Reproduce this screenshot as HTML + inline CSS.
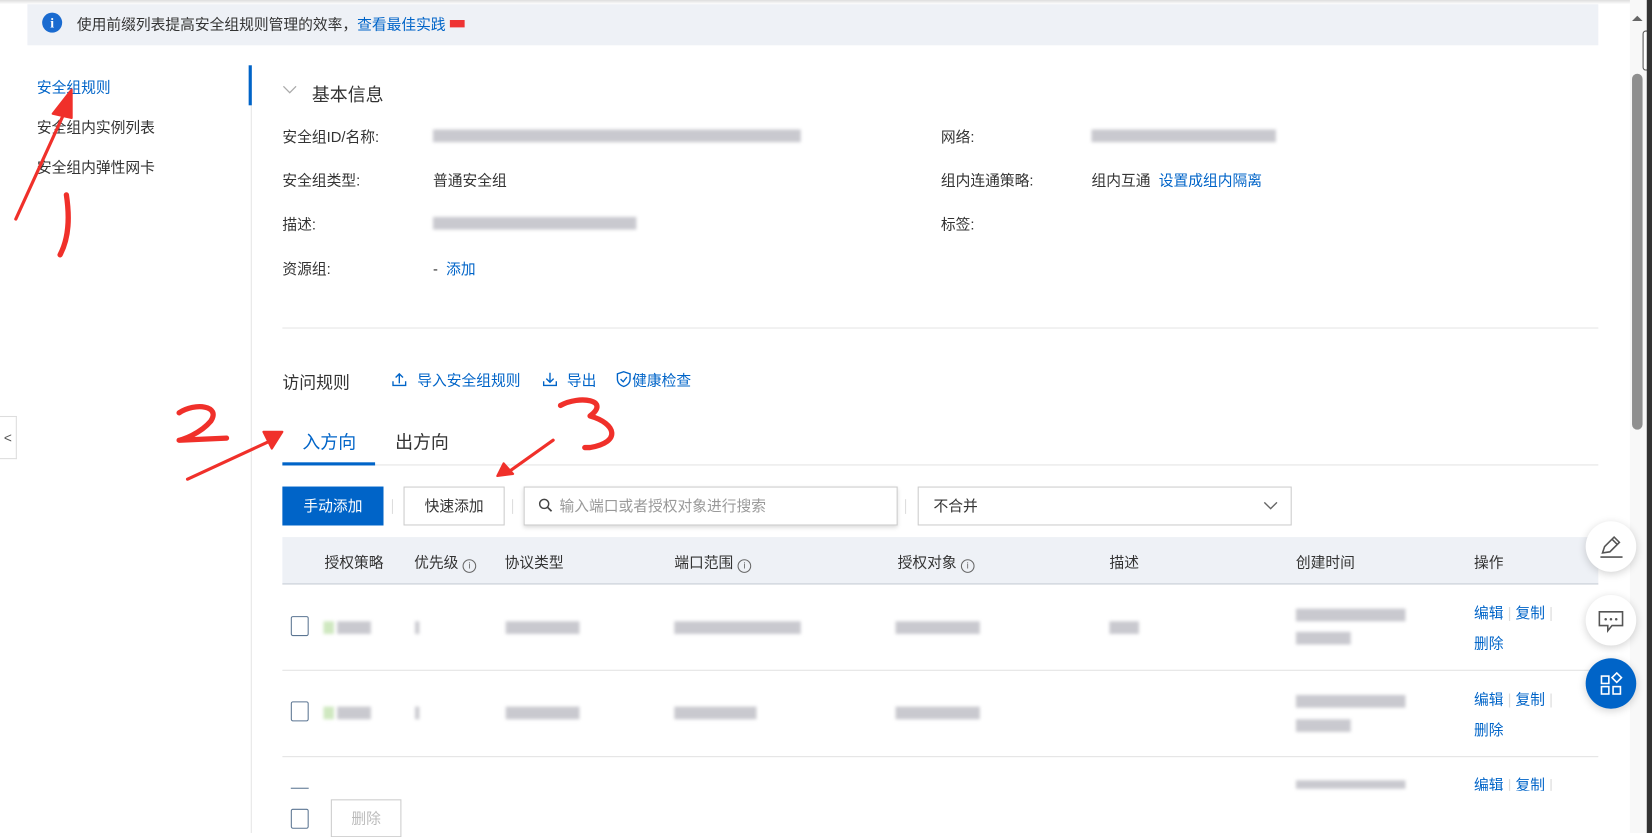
<!DOCTYPE html>
<html><head><meta charset="utf-8"><style>
*{margin:0;padding:0;box-sizing:border-box}
html,body{width:1652px;height:833px;overflow:hidden;background:#fff}
#w{position:absolute;left:0;top:0;width:1568px;height:791px;transform:scale(1.0536,1.0531);transform-origin:0 0;font-family:"Liberation Sans","Noto Sans CJK SC",sans-serif;color:#333;font-size:14px}
.a{position:absolute;white-space:nowrap}
.b{color:#0064c8}
.bl{position:absolute;background:#c9c9cf;filter:blur(1.5px);height:12px}
.sep{position:absolute;width:1px;height:14px;background:#ddd}
.hd{position:absolute;top:524px;font-size:14px;color:#333}
.ic{display:inline-block;width:13px;height:13px;border:1px solid #666;border-radius:50%;font-size:9px;text-align:center;line-height:11px;vertical-align:-1px;margin-left:4px;color:#666}
.cb{position:absolute;width:17px;height:19px;border:1.5px solid #5b7592;border-radius:2px}
.fb{position:absolute;width:48px;height:48px;border-radius:50%;background:#fff;box-shadow:0 2px 8px rgba(0,0,0,.18)}
</style></head><body><div id="w">
<div class="a" style="left:0;top:0;width:1548px;height:4px;background:linear-gradient(#ddd,#fff)"></div>
<div class="a" style="left:26px;top:4px;width:1491px;height:39px;background:#eef1f6"></div>
<div class="a" style="left:40px;top:12px;width:19px;height:19px;border-radius:50%;background:#1a6bd0;color:#fff;font-weight:bold;text-align:center;line-height:19px;font-size:13px;font-family:'Liberation Serif',serif">i</div>
<div class="a" style="left:73px;top:13px">使用前缀列表提高安全组规则管理的效率，<span class="b">查看最佳实践</span> <span style="display:inline-block;width:14px;height:7px;background:#e33;vertical-align:2px"></span></div>
<div class="a" style="left:1547px;top:0;width:21px;height:791px;background:#f8f8f8"></div>
<div class="a" style="left:1549px;top:70px;width:10px;height:338px;background:#8f8f8f;border-radius:5px"></div>
<div class="a" style="left:1559px;top:29px;width:7px;height:38px;border:1px solid #555;border-radius:3px;background:#fff"></div>
<div class="a" style="left:1563px;top:0;width:5px;height:791px;background:#333"></div>
<div class="a" style="left:1549px;top:10px;width:0;height:0;border:5px solid transparent;border-bottom:5px solid #666"></div>

<div class="a b" style="left:35px;top:73px">安全组规则</div>
<div class="a" style="left:35px;top:111px">安全组内实例列表</div>
<div class="a" style="left:35px;top:149px">安全组内弹性网卡</div>
<div class="a" style="left:238px;top:62px;width:1px;height:729px;background:#e6e6e6"></div>
<div class="a" style="left:236px;top:62px;width:3px;height:38px;background:#0064c8"></div>
<div class="a" style="left:0;top:395px;width:16px;height:41px;border:1px solid #ddd;border-left:none;background:#fff;font-size:13px;line-height:39px;text-align:center;color:#555">&lt;</div>

<svg class="a" style="left:268px;top:80px" width="14" height="10"><path d="M1 2 L7 8 L13 2" fill="none" stroke="#aaa" stroke-width="1.2"/></svg>
<div class="a" style="left:296px;top:76px;font-size:17px">基本信息</div>
<div class="a" style="left:268px;top:120px">安全组ID/名称:</div>
<div class="bl" style="left:411px;top:123px;width:349px"></div>
<div class="a" style="left:268px;top:161px">安全组类型:</div>
<div class="a" style="left:411px;top:161px">普通安全组</div>
<div class="a" style="left:268px;top:203px">描述:</div>
<div class="bl" style="left:411px;top:206px;width:193px"></div>
<div class="a" style="left:268px;top:245px">资源组:</div>
<div class="a" style="left:411px;top:245px">- &nbsp;<span class="b">添加</span></div>
<div class="a" style="left:893px;top:120px">网络:</div>
<div class="bl" style="left:1036px;top:123px;width:175px"></div>
<div class="a" style="left:893px;top:161px">组内连通策略:</div>
<div class="a" style="left:1036px;top:161px">组内互通 &nbsp;<span class="b">设置成组内隔离</span></div>
<div class="a" style="left:893px;top:203px">标签:</div>
<div class="a" style="left:268px;top:311px;width:1249px;height:1px;background:#e6e6e6"></div>

<div class="a" style="left:268px;top:350px;font-size:16px">访问规则</div>
<svg class="a" style="left:372px;top:353px" width="14" height="14"><path d="M7 11 V2 M3.5 5.5 L7 2 L10.5 5.5 M1 9 V13 H13 V9" fill="none" stroke="#0064c8" stroke-width="1.3"/></svg>
<div class="a b" style="left:396px;top:351px">导入安全组规则</div>
<svg class="a" style="left:515px;top:353px" width="14" height="14"><path d="M7 1 V10 M3.5 6.5 L7 10 L10.5 6.5 M1 9 V13 H13 V9" fill="none" stroke="#0064c8" stroke-width="1.3"/></svg>
<div class="a b" style="left:538px;top:351px">导出</div>
<svg class="a" style="left:585px;top:352px" width="14" height="16"><path d="M7 1 L13 3 V8 C13 12 10 14 7 15 C4 14 1 12 1 8 V3 Z" fill="none" stroke="#0064c8" stroke-width="1.3"/><path d="M4 8 L6.5 10.5 L10 6" fill="none" stroke="#0064c8" stroke-width="1.3"/></svg>
<div class="a b" style="left:600px;top:351px">健康检查</div>

<div class="a b" style="left:287px;top:406px;font-size:17px">入方向</div>
<div class="a" style="left:375px;top:406px;font-size:17px">出方向</div>
<div class="a" style="left:268px;top:441px;width:1249px;height:1px;background:#e3e3e3"></div>
<div class="a" style="left:268px;top:439px;width:88px;height:3px;background:#0064c8"></div>

<div class="a" style="left:268px;top:462px;width:96px;height:37px;background:#0064c8;color:#fff;text-align:center;line-height:37px">手动添加</div>
<div class="sep" style="left:372px;top:474px"></div>
<div class="a" style="left:383px;top:462px;width:96px;height:37px;border:1px solid #ccc;text-align:center;line-height:35px">快速添加</div>
<div class="sep" style="left:486px;top:474px"></div>
<div class="a" style="left:497px;top:462px;width:355px;height:37px;border:1px solid #ccc;box-shadow:0 2px 4px rgba(0,0,0,.15);color:#999;line-height:35px;padding-left:33px">输入端口或者授权对象进行搜索</div>
<svg class="a" style="left:511px;top:473px" width="14" height="14"><circle cx="5.5" cy="5.5" r="4.3" fill="none" stroke="#444" stroke-width="1.4"/><path d="M8.5 8.5L12.5 12.5" stroke="#444" stroke-width="1.6"/></svg>
<div class="sep" style="left:859px;top:474px"></div>
<div class="a" style="left:871px;top:462px;width:355px;height:37px;border:1px solid #ccc;line-height:35px;padding-left:14px">不合并</div>
<svg class="a" style="left:1199px;top:475px" width="14" height="10"><path d="M1 2 L7 8 L13 2" fill="none" stroke="#666" stroke-width="1.3"/></svg>

<div class="a" style="left:268px;top:510px;width:1249px;height:45px;background:#eef1f6;border-bottom:1px solid #c5cbd3"></div>
<div class="hd" style="left:308px">授权策略</div>
<div class="hd" style="left:393px">优先级<span class="ic">i</span></div>
<div class="hd" style="left:479px">协议类型</div>
<div class="hd" style="left:640px">端口范围<span class="ic">i</span></div>
<div class="hd" style="left:852px">授权对象<span class="ic">i</span></div>
<div class="hd" style="left:1053px">描述</div>
<div class="hd" style="left:1230px">创建时间</div>
<div class="hd" style="left:1399px">操作</div>

<div class="a" style="left:268px;top:636px;width:1249px;height:1px;background:#e3e3e3"></div>
<div class="a" style="left:268px;top:718px;width:1249px;height:1px;background:#e3e3e3"></div>

<div class="cb" style="left:276px;top:585px"></div>
<div class="bl" style="left:307px;top:590px;width:10px;background:#cfe8c0"></div>
<div class="bl" style="left:320px;top:590px;width:32px"></div>
<div class="bl" style="left:394px;top:590px;width:4px"></div>
<div class="bl" style="left:480px;top:590px;width:70px"></div>
<div class="bl" style="left:640px;top:590px;width:120px"></div>
<div class="bl" style="left:850px;top:590px;width:80px"></div>
<div class="bl" style="left:1053px;top:590px;width:28px"></div>
<div class="bl" style="left:1230px;top:578px;width:104px"></div>
<div class="bl" style="left:1230px;top:600px;width:52px"></div>
<div class="a" style="left:1399px;top:572px"><span class="b">编辑</span><span style="color:#ddd"> | </span> <span class="b">复制</span><span style="color:#ddd"> |</span></div>
<div class="a b" style="left:1399px;top:601px">删除</div>

<div class="cb" style="left:276px;top:666px"></div>
<div class="bl" style="left:307px;top:671px;width:10px;background:#cfe8c0"></div>
<div class="bl" style="left:320px;top:671px;width:32px"></div>
<div class="bl" style="left:394px;top:671px;width:4px"></div>
<div class="bl" style="left:480px;top:671px;width:70px"></div>
<div class="bl" style="left:640px;top:671px;width:78px"></div>
<div class="bl" style="left:850px;top:671px;width:80px"></div>
<div class="bl" style="left:1230px;top:660px;width:104px"></div>
<div class="bl" style="left:1230px;top:683px;width:52px"></div>
<div class="a" style="left:1399px;top:654px"><span class="b">编辑</span><span style="color:#ddd"> | </span> <span class="b">复制</span><span style="color:#ddd"> |</span></div>
<div class="a b" style="left:1399px;top:683px">删除</div>

<div class="bl" style="left:1230px;top:741px;width:104px;height:8px"></div>
<div class="a" style="left:1399px;top:735px;height:16px;overflow:hidden"><span class="b">编辑</span><span style="color:#ddd"> | </span> <span class="b">复制</span><span style="color:#ddd"> |</span></div>
<div class="a" style="left:276px;top:748px;width:17px;height:3px;border-top:1.5px solid #5b7592"></div>
<div class="a" style="left:268px;top:751px;width:300px;height:40px;background:#fff"></div>
<div class="cb" style="left:276px;top:768px"></div>
<div class="a" style="left:314px;top:759px;width:67px;height:36px;border:1px solid #ccc;color:#bbb;text-align:center;line-height:34px">删除</div>

<div class="fb" style="left:1505px;top:495px"></div>
<svg class="a" style="left:1516px;top:506px" width="26" height="26"><path d="M5 19 L7 13 L16 4 L21 9 L12 18 Z M14 6 L19 11" fill="none" stroke="#555" stroke-width="1.5"/><path d="M3 23 H24" stroke="#555" stroke-width="1.5"/></svg>
<div class="fb" style="left:1505px;top:565px"></div>
<svg class="a" style="left:1516px;top:578px" width="26" height="24"><path d="M2 3 H24 V16 H14 L10 21 V16 H2 Z" fill="none" stroke="#555" stroke-width="1.5"/><circle cx="8" cy="10" r="1.2" fill="#555"/><circle cx="13" cy="10" r="1.2" fill="#555"/><circle cx="18" cy="10" r="1.2" fill="#555"/></svg>
<div class="fb" style="left:1505px;top:625px;background:#0064c8"></div>
<svg class="a" style="left:1518px;top:638px" width="24" height="24"><g fill="none" stroke="#fff" stroke-width="1.5"><rect x="2" y="4" width="7" height="7"/><rect x="2" y="14" width="7" height="7"/><rect x="13" y="14" width="7" height="7"/><path d="M16.5 1 L21 5.5 L16.5 10 L12 5.5 Z"/></g></svg>

<svg class="a" style="left:0;top:0" width="1568" height="791"><g fill="none" stroke="#f0302a" stroke-linecap="round" stroke-linejoin="round">
<path d="M15 208 L62 105" stroke-width="3"/><path d="M50 108 L68 85 L68 112 Z" fill="#f0302a" stroke-width="2"/>
<path d="M63 185 C66 205 66 225 57 242" stroke-width="5"/>
<path d="M170 392 C185 382 210 385 200 400 C190 412 172 418 170 418 L215 416" stroke-width="5"/>
<path d="M178 455 L258 418" stroke-width="3"/><path d="M250 410 L268 410 L258 426 Z" fill="#f0302a" stroke-width="2"/>
<path d="M532 385 C550 375 580 380 560 395 C585 402 590 420 560 425 L555 425" stroke-width="5"/>
<path d="M525 418 L480 450" stroke-width="3"/><path d="M472 452 L478 440 L487 450 Z" fill="#f0302a" stroke-width="2"/>
</g></svg>
</div></body></html>
